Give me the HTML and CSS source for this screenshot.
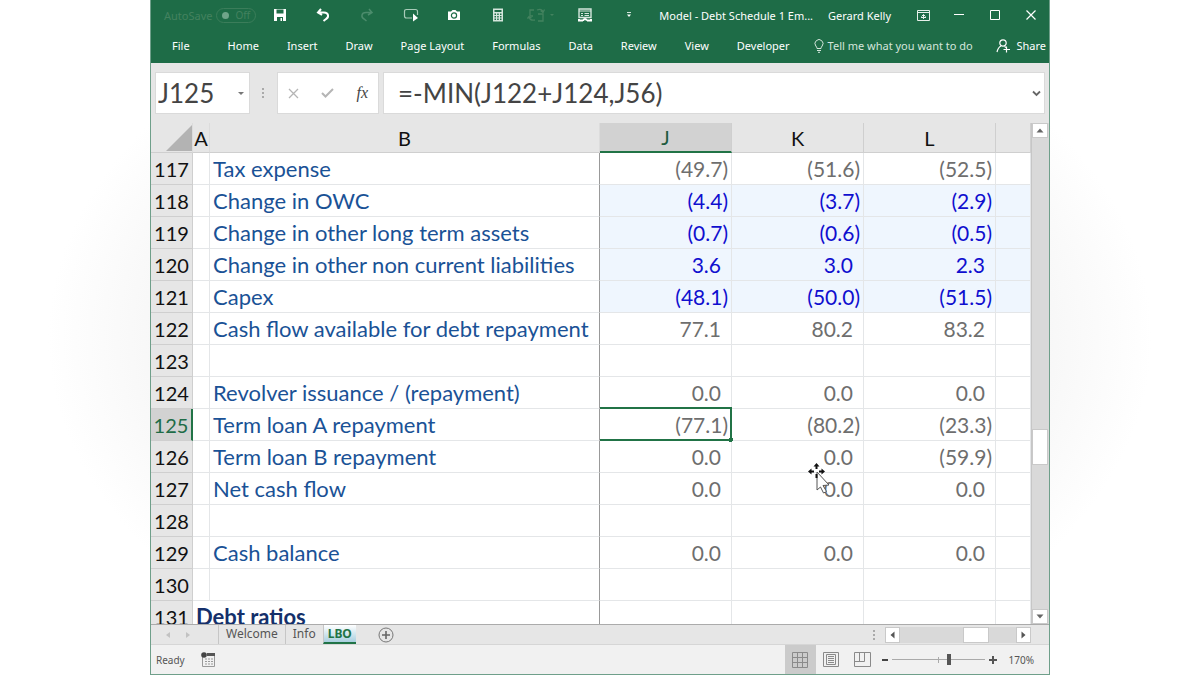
FILE: index.html
```html
<!DOCTYPE html>
<html lang="en">
  <head>
    <meta charset="UTF-8" />
    <meta name="viewport" content="width=device-width, initial-scale=1.0" />
    <title>Model - Debt Schedule</title>
    <link rel="stylesheet" href="styles.css">
  </head>
  <body>
    <div class="window">
      <header class="titlebar">
        <label class="autosave">AutoSave
          <span class="toggle"><input type="checkbox" disabled />Off</span>
        </label>
        <div class="quick">
          <button aria-label="Save"><svg width="14" height="14" viewBox="0 0 14 14"><path d="M1 1h12v12H1z" fill="#fff"/><path d="M3.500 1.500h7v4h-7zM4 9h6v4H4z" fill="#1e6c47"/><path d="M7.500 10h1.500v3H7.500z" fill="#fff"/></svg></button>
          <button aria-label="Undo"><svg width="14" height="14" viewBox="0 0 14 14"><path d="M5 1L2 4.500L6 7M2.500 4.500H8c5 0 5 5 2 6.500L7.500 13" fill="none" stroke="#fff" stroke-width="2"/></svg></button>
          <button aria-label="Redo" disabled><svg width="14" height="14" viewBox="0 0 14 14"><path d="M9 1l3 3.500L8 7M11.500 4.500H6c-5 0-5 5-2 6.500L6.500 13" fill="none" stroke="#4b8c6c" stroke-width="1.500"/></svg></button>
          <button aria-label="Touch mode"><svg width="16" height="14" viewBox="0 0 16 14"><path d="M9 10H3.500Q1.500 10 1.500 8V3.500Q1.500 1.500 3.500 1.500h9Q14.500 1.500 14.500 3.500V7" fill="none" stroke="#a9cbb9" stroke-width="1.200"/><path d="M10 5.500l5 4.500l-5 3.500z" fill="#fff"/></svg></button>
          <button aria-label="Camera"><svg width="14" height="12" viewBox="0 0 14 12"><path d="M1 2.500h3L5.500 1h3L10 2.500h3V11H1z" fill="#fff"/><circle cx="7" cy="6.500" r="2.600" fill="#fff" stroke="#1e6c47" stroke-width="1.200"/></svg></button>
          <button aria-label="Calculator"><svg width="12" height="14" viewBox="0 0 12 14"><path d="M1 0.500h10v13H1z" fill="#d4e5dc"/><path d="M2.500 2h7v2h-7zM2.500 5.500h1.500v1.500H2.500zM5.200 5.500h1.500v1.500H5.200zM8 5.500h1.500v1.500H8zM2.500 8h1.500v1.500H2.500zM5.200 8h1.500v1.500H5.200zM8 8h1.500v1.500H8zM2.500 10.500h1.500V12H2.500zM5.200 10.500h1.500V12H5.200zM8 10.500h1.500V12H8z" fill="#1e6c47"/></svg></button>
          <button aria-label="Refresh" disabled><svg width="28" height="16" viewBox="0 0 28 16"><g fill="none" stroke="#43825f" stroke-width="1.300"><path d="M7 3H3v6h3M11 7h5v7h-5"/><path d="M10 3q5-2 6 2M8 13q-5 1-6-3M13.500 3.500L16 5.500L17.500 2.500M.5 11.500L2 9.500l2.500 1.500"/></g><path d="M23 7h4l-2 2z" fill="#43825f"/></svg></button>
          <button aria-label="Form"><svg width="14" height="15" viewBox="0 0 14 15"><path d="M1 1h12v8.500H1z" fill="none" stroke="#d4e5dc" stroke-width="1.400"/><path d="M1 3h12M3 5.500h2M6.500 5.500h4.500M3 7.500h2M6.500 7.500h4.500" stroke="#d4e5dc"/><path d="M1 11v1.500h4M13 11v1.500H9M5 12.500q2-3 4 0" fill="none" stroke="#fff" stroke-width="2"/></svg></button>
          <button aria-label="Customize"><svg width="6" height="6" viewBox="0 0 6 6"><path d="M1 0.500h4" stroke="#d4e5dc"/><path d="M1 2.500h4l-2 2.500z" fill="#fff"/></svg></button>
        </div>
        <span class="title">Model - Debt Schedule 1 Em...</span>
        <span class="user">Gerard Kelly</span>
        <div class="controls">
          <button aria-label="Ribbon options"><svg width="13" height="11" viewBox="0 0 13 11"><path d="M.5.5h12v10H.5zM.5 2.500h12M6.500 9V4.500M4.500 6.500l2-2l2 2M4 7.500h5" fill="none" stroke="#e6f0ea"/></svg></button>
          <button aria-label="Minimize"><svg width="10" height="10" viewBox="0 0 10 10"><path d="M0 4.500h10" stroke="#fff"/></svg></button>
          <button aria-label="Maximize"><svg width="10" height="10" viewBox="0 0 10 10"><path d="M.5.5h9v9h-9z" fill="none" stroke="#fff"/></svg></button>
          <button aria-label="Close"><svg width="10" height="10" viewBox="0 0 10 10"><path d="M.5.5l9 9M9.500.5l-9 9" stroke="#fff" stroke-width="1.200"/></svg></button>
        </div>
      </header>

      <nav class="ribbon">
        <button class="file">File</button>
        <button>Home</button>
        <button>Insert</button>
        <button>Draw</button>
        <button>Page Layout</button>
        <button>Formulas</button>
        <button>Data</button>
        <button>Review</button>
        <button>View</button>
        <button>Developer</button>
        <button class="tell"><svg width="10" height="14" viewBox="0 0 10 14"><path d="M3 9.500Q3 8 1.800 7A4 4 0 1 1 8.200 7Q7 8 7 9.500zM3 11.500h4M4 13.300h2" fill="none" stroke="#d4e5dc"/></svg>Tell me what you want to do</button>
        <button class="share"><svg width="15" height="14" viewBox="0 0 15 14"><circle cx="7" cy="4" r="3.200" fill="none" stroke="#fff" stroke-width="1.200"/><path d="M1 13q1-4.500 4-6M8.500 7.500l1.500 1M10.500 7.500v6M7.500 10.500h6.500" fill="none" stroke="#fff" stroke-width="1.200"/></svg>Share</button>
      </nav>

      <div class="formula-bar">
        <div class="name-box">
          <input type="text" value="J125" aria-label="Name box" />
          <button aria-label="Names"><svg width="8" height="5" viewBox="0 0 8 5"><path d="M1 1h6l-3 3z" fill="#777"/></svg></button>
        </div>
        <svg class="dots" width="3" height="12" viewBox="0 0 3 12"><path d="M0 1h2v2H0zM0 5h2v2H0zM0 9h2v2H0z" fill="#aaa"/></svg>
        <div class="formula-buttons">
          <button aria-label="Cancel"><svg width="11" height="11" viewBox="0 0 11 11"><path d="M1 1l9 9M10 1l-9 9" stroke="#b5b5b5" stroke-width="1.300"/></svg></button>
          <button aria-label="Enter"><svg width="13" height="10" viewBox="0 0 13 10"><path d="M1 5l3.500 3.500L12 1" fill="none" stroke="#b5b5b5" stroke-width="2"/></svg></button>
          <button class="fx" aria-label="Insert function">fx</button>
        </div>
        <div class="formula">
          <input type="text" value="=-MIN(J122+J124,J56)" aria-label="Formula" />
          <button aria-label="Expand formula bar"><svg width="9" height="7" viewBox="0 0 9 7"><path d="M1 1.500l3.500 3.500L8 1.500" fill="none" stroke="#666" stroke-width="1.800"/></svg></button>
        </div>
      </div>

      <main class="sheet">
        <div class="grid">
          <table>
            <colgroup>
              <col class="col-num"><col class="col-a"><col><col class="col-val"><col class="col-val"><col class="col-val"><col class="col-m">
            </colgroup>
            <thead>
              <tr>
                <th class="corner"><svg width="26" height="26" viewBox="0 0 26 26"><path d="M26 0v26H0z" fill="#b3b3b3"/></svg></th>
                <th>A</th><th>B</th><th class="active">J</th><th>K</th><th>L</th><th></th>
              </tr>
            </thead>
            <tbody>
              <tr><th>117</th><td></td><td class="name">Tax expense</td><td>(49.7)</td><td>(51.6)</td><td>(52.5)</td><td></td></tr>
              <tr class="input"><th>118</th><td></td><td class="name">Change in OWC</td><td>(4.4)</td><td>(3.7)</td><td>(2.9)</td><td></td></tr>
              <tr class="input"><th>119</th><td></td><td class="name">Change in other long term assets</td><td>(0.7)</td><td>(0.6)</td><td>(0.5)</td><td></td></tr>
              <tr class="input"><th>120</th><td></td><td class="name">Change in other non current liabilities</td><td class="pos">3.6</td><td class="pos">3.0</td><td class="pos">2.3</td><td></td></tr>
              <tr class="input"><th>121</th><td></td><td class="name">Capex</td><td>(48.1)</td><td>(50.0)</td><td>(51.5)</td><td></td></tr>
              <tr><th>122</th><td></td><td class="name">Cash flow available for debt repayment</td><td class="pos">77.1</td><td class="pos">80.2</td><td class="pos">83.2</td><td></td></tr>
              <tr><th>123</th><td></td><td class="name"></td><td></td><td></td><td></td><td></td></tr>
              <tr><th>124</th><td></td><td class="name">Revolver issuance / (repayment)</td><td class="pos">0.0</td><td class="pos">0.0</td><td class="pos">0.0</td><td></td></tr>
              <tr><th class="active">125</th><td></td><td class="name">Term loan A repayment</td><td class="selected">(77.1)</td><td>(80.2)</td><td>(23.3)</td><td></td></tr>
              <tr><th>126</th><td></td><td class="name">Term loan B repayment</td><td class="pos">0.0</td>
                <td class="pos pointer-cell">0.0
                  <svg class="pointer" width="22" height="31" viewBox="0 0 22 31"><path d="M9 9l12 13l-6 .5l3.500 6l-3 1.500l-3-6L9 27z" fill="#fff" stroke="#555"/><path d="M8.500 0l3 3.500h-2V6h-2V3.500h-2zM0 8.500l3.500-3v2H6v2H3.500v2zM17 8.500l-3.500-3v2H11v2h2.500v2zM7.500 11h2v4h-2z" fill="#111"/></svg>
                </td>
                <td>(59.9)</td><td></td></tr>
              <tr><th>127</th><td></td><td class="name">Net cash flow</td><td class="pos">0.0</td><td class="pos">0.0</td><td class="pos">0.0</td><td></td></tr>
              <tr><th>128</th><td></td><td class="name"></td><td></td><td></td><td></td><td></td></tr>
              <tr><th>129</th><td></td><td class="name">Cash balance</td><td class="pos">0.0</td><td class="pos">0.0</td><td class="pos">0.0</td><td></td></tr>
              <tr><th>130</th><td></td><td class="name"></td><td></td><td></td><td></td><td></td></tr>
              <tr><th>131</th><td class="name section" colspan="2">Debt ratios</td><td></td><td></td><td></td><td></td></tr>
            </tbody>
          </table>
        </div>
        <div class="vscroll">
          <button aria-label="Scroll up"><svg width="8" height="5" viewBox="0 0 8 5"><path d="M.5 4.500h7L4 .5z" fill="#666"/></svg></button>
          <div class="space-above"></div>
          <div class="thumb"></div>
          <div class="space-below"></div>
          <button aria-label="Scroll down"><svg width="8" height="5" viewBox="0 0 8 5"><path d="M.5.5h7L4 4.500z" fill="#666"/></svg></button>
        </div>
      </main>

      <div class="tabs">
        <div class="tab-nav">
          <button aria-label="Previous sheet"><svg width="4" height="6" viewBox="0 0 4 6"><path d="M4 0v6L0 3z" fill="#c2c2c2"/></svg></button>
          <button aria-label="Next sheet"><svg width="4" height="6" viewBox="0 0 4 6"><path d="M0 0v6l4-3z" fill="#c2c2c2"/></svg></button>
        </div>
        <button class="tab">Welcome</button>
        <button class="tab">Info</button>
        <button class="tab current">LBO</button>
        <button class="add" aria-label="New sheet"><svg width="16" height="16" viewBox="0 0 16 16"><circle cx="8" cy="8" r="7" fill="none" stroke="#777"/><path d="M8 4v8M4 8h8" stroke="#666" stroke-width="1.600"/></svg></button>
        <svg class="dots" width="3" height="12" viewBox="0 0 3 12"><path d="M0 1h2v2H0zM0 5h2v2H0zM0 9h2v2H0z" fill="#aaa"/></svg>
        <div class="hscroll">
          <button aria-label="Scroll left"><svg width="5" height="8" viewBox="0 0 5 8"><path d="M4.500.5v7L.5 4z" fill="#555"/></svg></button>
          <div class="space-left"></div>
          <div class="thumb"></div>
          <div class="space-right"></div>
          <button aria-label="Scroll right"><svg width="5" height="8" viewBox="0 0 5 8"><path d="M.5.5v7l4-3.500z" fill="#555"/></svg></button>
        </div>
      </div>

      <footer class="status">
        <span>Ready</span>
        <svg class="macro" width="15" height="15" viewBox="0 0 15 15"><path d="M1.500 5v9.500h12V3" fill="none" stroke="#999"/><path d="M6 1h8v3H6z" fill="#555"/><circle cx="3" cy="3" r="2.800" fill="#444"/><path d="M4 7h2M7 7h2M10 7h2M4 9.500h2M7 9.500h2M10 9.500h2M4 12h2M7 12h2M10 12h2" stroke="#999"/></svg>
        <div class="views">
          <button class="on" aria-label="Normal view"><svg width="16" height="16" viewBox="0 0 16 16"><path d="M.5.5h15v15H.5zM5.500.5v15M10.500.5v15M.5 5.500h15M.5 10.500h15" fill="none" stroke="#8a8a8a"/></svg></button>
          <button aria-label="Page layout view"><svg width="16" height="15" viewBox="0 0 16 15"><path d="M.5.5h15v14H.5zM3.500 2.500h9v10h-9zM5 4.500h6M5 6.500h6M5 8.500h6M5 10.500h6" fill="none" stroke="#8a8a8a"/></svg></button>
          <button aria-label="Page break view"><svg width="17" height="15" viewBox="0 0 17 15"><path d="M.5.5h16v14H.5zM5.500.5v9M10.500.5v9H.5" fill="none" stroke="#8a8a8a"/></svg></button>
        </div>
        <div class="zoom">
          <button aria-label="Zoom out"><svg width="6" height="8" viewBox="0 0 6 8"><path d="M0 4h6" stroke="#444" stroke-width="2"/></svg></button>
          <input type="range" min="0" max="100" value="62" aria-label="Zoom" />
          <button aria-label="Zoom in"><svg width="8" height="8" viewBox="0 0 8 8"><path d="M0 4h8M4 0v8" stroke="#555" stroke-width="2"/></svg></button>
          <span>170%</span>
        </div>
      </footer>
    </div>
  </body>
</html>
```
FILE: styles.css
```css
* {
  box-sizing: border-box;
}

body {
  margin: 0;
  background: radial-gradient(46% 55% at center, #f0f0f0 60%, #f7f7f7 80%, #ffffff);
  font-family: "Noto Sans", "Open Sans", sans-serif;
  font-size: 11px;
}

button {
  display: flex;
  align-items: center;
  justify-content: center;
  padding: 0;
  border: none;
  background: none;
  color: inherit;
  font: inherit;
  white-space: nowrap;
}

input {
  margin: 0;
  min-width: 0;
  border: none;
  background: none;
  color: inherit;
  font: inherit;
}

.window {
  display: flex;
  flex-direction: column;
  width: 75%;
  height: 100vh;
  margin: 0 auto;
  border: 1px solid #6f9f8a;
  border-top: none;
  background-color: #e6e6e6;
}

/* title bar */
.titlebar {
  display: flex;
  align-items: center;
  height: 30px;
  padding-left: 13px;
  background-color: #1e6c47;
  color: #fff;
  white-space: nowrap;
}

.autosave {
  display: flex;
  align-items: center;
  gap: 4px;
  width: 94px;
  color: #43825f;
}

.toggle {
  display: flex;
  align-items: center;
  gap: 6px;
  height: 15px;
  padding: 0 5px;
  border: 1px solid #3b7d5a;
  border-radius: 8px;
  font-size: 10px;
}

.toggle input {
  appearance: none;
  width: 7px;
  height: 7px;
  border-radius: 50%;
  background-color: #6fa58a;
}

.quick {
  display: grid;
  grid-template-columns: repeat(9, 1fr);
  flex: 1;
}

.title {
  margin: 0 15px 0 9px;
}

.user {
  margin-right: 14px;
}

.controls {
  display: grid;
  grid-template-columns: repeat(4, 36px);
}

/* ribbon */
.ribbon {
  display: flex;
  align-items: center;
  gap: 28px;
  height: 33px;
  padding: 0 3px 2px 21px;
  background-color: #1e6c47;
  color: #fff;
}

.file {
  margin-right: 10px;
}

.tell {
  gap: 4px;
  margin: 0 -6px 0 -4px;
  color: #d4e5dc;
}

.share {
  gap: 5px;
  margin-left: auto;
}

/* formula bar */
.formula-bar {
  display: flex;
  align-items: center;
  gap: 4px;
  height: 60px;
  padding: 0 4px;
  color: #444;
}

.name-box,
.formula-buttons,
.formula {
  display: flex;
  align-items: center;
  height: 42px;
  border: 1px solid #dadada;
  background-color: #fff;
}

.name-box {
  width: 95px;
  padding: 0 4px 0 2px;
}

.name-box input,
.formula input {
  flex: 1;
  padding: 0;
  font-family: Lato, sans-serif;
  font-size: 26px;
}

.formula-bar .dots {
  margin: 0 8px;
}

.formula-buttons {
  justify-content: space-between;
  width: 102px;
  padding: 0 10px;
}

.fx {
  font-family: "Liberation Serif", serif;
  font-size: 16px;
  font-style: italic;
}

.formula {
  flex: 1;
  padding: 0 3px 0 14px;
}

/* sheet */
.sheet {
  display: flex;
  flex: 1;
  min-height: 0;
  border-bottom: 1px solid #ababab;
}

.grid {
  flex: 1;
  overflow: hidden;
}

table {
  width: 100%;
  table-layout: fixed;
  border-collapse: separate;
  border-spacing: 0;
  font-family: Lato, sans-serif;
  font-size: 21px;
  line-height: 28px;
}

.col-num {
  width: 42px;
}

.col-a {
  width: 17px;
}

.col-val {
  width: 132px;
}

.col-m {
  width: 35px;
}

th {
  padding: 0;
  border-right: 1px solid #cfcfcf;
  border-bottom: 1px solid #cfcfcf;
  background-color: #e6e6e6;
  color: #111;
  font-size: 20px;
  font-weight: normal;
}

thead th {
  height: 30px;
  line-height: 26px;
}

thead th:nth-child(-n + 3) {
  border-right-color: #dcdcdc;
}

.corner svg {
  display: block;
  margin-left: auto;
}

thead .active {
  border-bottom: 2px solid #217346;
  background-color: #d2d2d2;
  color: #1e5c40;
}

tbody .active {
  border-right: 2px solid #217346;
  background-color: #d2d2d2;
  color: #1e6c47;
}

td {
  height: 32px;
  padding: 0 3px;
  border-right: 1px solid #e4e6e8;
  border-bottom: 1px solid #e4e6e8;
  background-color: #fff;
  color: #6e6e6e;
  text-align: right;
  white-space: nowrap;
}

.name {
  border-right-color: #999;
  color: #1a5296;
  font-size: 22px;
  text-align: left;
}

.section {
  color: #14306b;
  font-weight: bold;
}

.input td:nth-child(n + 4) {
  background-color: #eff6fe;
  color: #0f0fcf;
}

.pos {
  padding-right: 10px;
}

.selected,
.pointer-cell {
  position: relative;
}

.selected::before {
  content: "";
  position: absolute;
  inset: -2px -1px -1px 0;
  border: 2px solid #217346;
  border-left: none;
}

.selected::after {
  content: "";
  position: absolute;
  right: -2px;
  bottom: -2px;
  width: 4px;
  height: 4px;
  background-color: #217346;
}

.pointer {
  position: absolute;
  top: 22px;
  left: 76px;
  z-index: 1;
}

.vscroll {
  display: flex;
  flex-direction: column;
  width: 18px;
  padding-right: 1px;
  border-left: 1px solid #c6c6c6;
  background-color: #d9d9d9;
}

.vscroll button,
.hscroll button,
.thumb {
  border: 1px solid #c9c9c9;
  background-color: #fff;
}

.vscroll button {
  height: 15px;
}

.vscroll .thumb {
  height: 36px;
}

.space-above {
  flex: 67;
}

.space-below {
  flex: 33;
}

/* sheet tabs */
.tabs {
  display: flex;
  align-items: center;
  height: 19px;
  padding-right: 18px;
  color: #555;
  font-size: 12px;
}

.tab-nav {
  display: flex;
  gap: 16px;
  width: 67px;
  padding-left: 15px;
}

.tab {
  height: 19px;
  padding: 0 7px 2px;
  border-left: 1px solid #c6c6c6;
}

.current {
  padding: 0 4px;
  border-bottom: 2px solid #217346;
  background: linear-gradient(#fff, #a9cfdf);
  color: #217346;
  font-weight: bold;
}

.add {
  margin-left: 22px;
}

.tabs .dots {
  margin-left: auto;
  margin-right: 9px;
}

.hscroll {
  display: flex;
  width: 146px;
  height: 16px;
  background-color: #d9d9d9;
}

.hscroll button {
  width: 15px;
}

.hscroll .thumb {
  width: 26px;
}

.space-left {
  flex: 7;
}

.space-right {
  flex: 3;
}

/* status bar */
.status {
  display: flex;
  align-items: center;
  height: 30px;
  padding: 0 15px 0 5px;
  border-top: 1px solid #d6d6d6;
  background-color: #f1f1f1;
  color: #555;
  font-size: 10px;
}

.macro {
  margin-left: 16px;
}

.views {
  display: flex;
  height: 100%;
  margin-left: auto;
}

.views button {
  width: 31px;
}

.views .on {
  background-color: #cbcbcb;
}

.zoom {
  display: flex;
  align-items: center;
  gap: 4px;
  margin-left: 4px;
}

.zoom input {
  appearance: none;
  width: 93px;
  height: 11px;
  background:
    linear-gradient(#aaa, #aaa) 50% 50% / 1px 6px no-repeat,
    linear-gradient(#aaa, #aaa) 50% 50% / 100% 1px no-repeat;
}

.zoom input::-webkit-slider-thumb {
  appearance: none;
  width: 4px;
  height: 11px;
  background-color: #555;
}

.zoom span {
  margin-left: 8px;
}
```
